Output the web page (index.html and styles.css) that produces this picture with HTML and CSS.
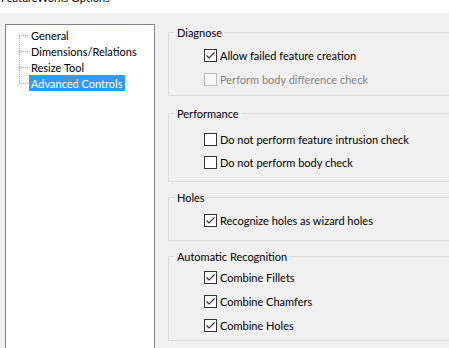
FILE: index.html
```html
<!DOCTYPE html>
<html lang="en">
<head>
    <meta charset="UTF-8">
    <title>FeatureWorks Options</title>
    <link rel="stylesheet" href="styles.css">
</head>
<body>
    <div class="titlebar"><span>FeatureWorks Options</span></div>

    <div class="dialog">
        <div class="tree">
            <ul>
                <li><span>General</span></li>
                <li><span>Dimensions/Relations</span></li>
                <li><span>Resize Tool</span></li>
                <li class="selected"><span>Advanced Controls</span></li>
            </ul>
        </div>

        <div class="options">
            <fieldset class="group group-diagnose">
                <legend>Diagnose</legend>
                <div class="rows">
                    <label class="check">
                        <span class="box"><svg viewBox="0 0 11 11" width="11" height="11"><polyline points="1.5,5.5 4,8 9.5,2.5"/></svg></span>
                        Allow failed feature creation
                    </label>
                    <label class="check disabled">
                        <span class="box"></span>
                        Perform body difference check
                    </label>
                </div>
            </fieldset>

            <fieldset class="group group-performance">
                <legend>Performance</legend>
                <div class="rows">
                    <label class="check">
                        <span class="box"></span>
                        Do not perform feature intrusion check
                    </label>
                    <label class="check">
                        <span class="box"></span>
                        Do not perform body check
                    </label>
                </div>
            </fieldset>

            <fieldset class="group group-holes">
                <legend>Holes</legend>
                <div class="rows">
                    <label class="check">
                        <span class="box"><svg viewBox="0 0 11 11" width="11" height="11"><polyline points="1.5,5.5 4,8 9.5,2.5"/></svg></span>
                        Recognize holes as wizard holes
                    </label>
                </div>
            </fieldset>

            <fieldset class="group group-auto">
                <legend>Automatic Recognition</legend>
                <div class="rows">
                    <label class="check">
                        <span class="box"><svg viewBox="0 0 11 11" width="11" height="11"><polyline points="1.5,5.5 4,8 9.5,2.5"/></svg></span>
                        Combine Fillets
                    </label>
                    <label class="check">
                        <span class="box"><svg viewBox="0 0 11 11" width="11" height="11"><polyline points="1.5,5.5 4,8 9.5,2.5"/></svg></span>
                        Combine Chamfers
                    </label>
                    <label class="check">
                        <span class="box"><svg viewBox="0 0 11 11" width="11" height="11"><polyline points="1.5,5.5 4,8 9.5,2.5"/></svg></span>
                        Combine Holes
                    </label>
                </div>
            </fieldset>
        </div>
    </div>
</body>
</html>
```

FILE: styles.css
```css
* {
    box-sizing: border-box;
}

body {
    margin: 0;
    height: 348px;
    overflow: hidden;
    background: #f0f0f0;
    color: #000;
    font-family: Lato, "Noto Sans", sans-serif;
    font-size: 11px;
}

.titlebar {
    height: 13px;
    background: #fff;
    overflow: hidden;
}

.titlebar span {
    display: block;
    line-height: 16px;
    margin-top: -10px;
    padding-left: 1px;
}

.dialog {
    display: flex;
    gap: 13px;
    padding: 11px 0 0 5px;
}

/* tree view */
.tree {
    flex: none;
    width: 150px;
    height: 400px;
    background: #fff;
    border: 1px solid #828790;
}

.tree ul {
    list-style: none;
    margin: 0;
    padding: 2px 0 0 23px;
}

.tree li {
    position: relative;
    height: 16px;
    line-height: 16px;
    white-space: nowrap;
}

.tree li span {
    display: inline-block;
    padding: 1px 3px 0 2px;
    height: 16px;
    line-height: 15px;
}

.tree li::before {
    content: "";
    position: absolute;
    left: -10px;
    top: 8px;
    width: 9px;
    border-top: 1px dotted #a0a0a0;
}

.tree li + li::after {
    content: "";
    position: absolute;
    left: -10px;
    top: -8px;
    height: 16px;
    border-left: 1px dotted #a0a0a0;
}

.tree li.selected span {
    background: #3399ff;
    color: #fff;
}

/* option groups */
.options {
    flex: none;
    width: 320px;
    display: flex;
    flex-direction: column;
    gap: 7px;
}

.group {
    margin: 0;
    min-width: 0;
    padding: 8px 0 7px 6px;
    border: 1px solid #dcdcdc;
}

.group legend {
    padding: 1px 2px 0;
    line-height: 15px;
}

.group-diagnose {
    padding-top: 9px;
    padding-bottom: 9px;
    margin-bottom: 2px;
}

.group-performance {
    padding-top: 12px;
    padding-bottom: 12px;
}

.group-performance .rows {
    gap: 10px;
}

.group-holes {
    padding-top: 9px;
    padding-bottom: 13px;
}

.group-auto {
    padding-top: 7px;
    padding-bottom: 8px;
}

.rows {
    display: flex;
    flex-direction: column;
    gap: 11px;
    padding-left: 29px;
}

.check {
    display: flex;
    align-items: center;
    gap: 3px;
    height: 13px;
    white-space: nowrap;
}

.box {
    flex: none;
    width: 13px;
    height: 13px;
    border: 1px solid #333;
    background: #fff;
    display: flex;
    align-items: center;
    justify-content: center;
}

.box svg {
    fill: none;
    stroke: #333;
    stroke-width: 1.1;
}

.check.disabled {
    color: #838383;
}

.check.disabled .box {
    border-color: #bcbcbc;
    background: #f7f7f7;
}
```
